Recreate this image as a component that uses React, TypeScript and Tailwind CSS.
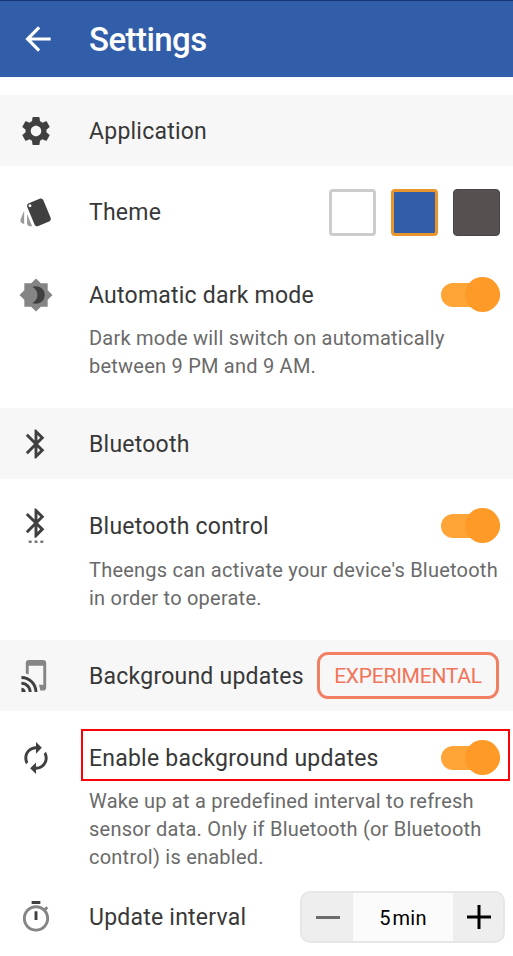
import type { ReactNode } from "react";

function Icon({ children }: { children: ReactNode }) {
  return (
    <svg viewBox="0 0 24 24" className="ml-[18px] h-9 w-9 shrink-0 fill-[#404040] p-[0.5px]">
      {children}
    </svg>
  );
}

function Label({ children }: { children: ReactNode }) {
  return (
    <span className="ml-[35px] flex-1 whitespace-nowrap pt-[2px] text-[23px] leading-7 tracking-[0.23px] text-[#383838]">
      {children}
    </span>
  );
}

function Section({ icon, title, children }: { icon: ReactNode; title: string; children?: ReactNode }) {
  return (
    <div className="flex h-[71px] items-center bg-[#f7f7f7] pr-[14px]">
      {icon}
      <Label>{title}</Label>
      {children}
    </div>
  );
}

function Toggle() {
  return (
    <span className="flex h-[35px] w-[59px] shrink-0 items-center">
      <span className="flex h-6 w-[59px] items-center justify-end rounded-full bg-[#ffa436]">
        <span className="h-[35px] w-[35px] shrink-0 rounded-full bg-[#fd9a28]" />
      </span>
    </span>
  );
}

function Description({ lines }: { lines: string[] }) {
  return (
    <p className="pl-[89px] text-[20px] leading-7 tracking-[0.23px] text-[#6a6a6a]">
      {lines.map((line) => (
        <span key={line} className="block whitespace-nowrap">
          {line}
        </span>
      ))}
    </p>
  );
}

const gear =
  "M19.14 12.94c.04-.3.06-.61.06-.94 0-.32-.02-.64-.07-.94l2.03-1.58c.18-.14.23-.41.12-.61l-1.92-3.32c-.12-.22-.37-.29-.59-.22l-2.39.96c-.5-.38-1.03-.7-1.62-.94l-.36-2.54c-.04-.24-.24-.41-.48-.41h-3.84c-.24 0-.43.17-.47.41l-.36 2.54c-.59.24-1.13.57-1.62.94l-2.39-.96c-.22-.08-.47 0-.59.22L2.74 8.87c-.12.21-.08.47.12.61l2.03 1.58c-.05.3-.09.63-.09.94s.02.64.07.94l-2.03 1.58c-.18.14-.23.41-.12.61l1.92 3.32c.12.22.37.29.59.22l2.39-.96c.5.38 1.03.7 1.62.94l.36 2.54c.05.24.24.41.48.41h3.84c.24 0 .44-.17.47-.41l.36-2.54c.59-.24 1.13-.56 1.62-.94l2.39.96c.22.08.47 0 .59-.22l1.92-3.32c.12-.22.07-.47-.12-.61l-2.01-1.58zM12 15.6c-1.98 0-3.6-1.62-3.6-3.6s1.62-3.6 3.6-3.6 3.6 1.62 3.6 3.6-1.62 3.6-3.6 3.6z";

export default function App() {
  return (
    <main className="h-[956px] w-[513px] overflow-hidden bg-white font-[Roboto,sans-serif]">
      <header className="flex h-[77px] items-center border-t border-[#173572] bg-[#325ea9]">
        <svg viewBox="0 0 24 24" className="ml-[19px] h-[38px] w-[38px] fill-white">
          <path d="M20 11H7.83l5.59-5.59L12 4l-8 8 8 8 1.41-1.41L7.83 13H20v-2z" />
        </svg>
        <h1 className="ml-8 mt-px text-[33px] font-medium leading-10 tracking-[-0.55px] text-white">Settings</h1>
      </header>

      <div className="pt-[18px]">
        <Section title="Application" icon={<Icon><path d={gear} /></Icon>} />

        <div className="flex h-[92px] items-center pr-[13px]">
          <Icon>
            <path fill="#999999" d="M2.53 19.65l1.34.56v-9.03l-2.43 5.86c-.41 1.02.08 2.19 1.09 2.61zM5.88 19.75c0 1.1.9 2 2 2h1.45l-3.45-8.34v6.34z" />
            <path d="M22.03 15.95L17.07 3.98c-.31-.75-1.04-1.21-1.81-1.23-.26 0-.53.04-.79.15L7.1 5.95c-.75.31-1.21 1.03-1.23 1.8-.01.27.04.54.15.8l4.96 11.97c.31.76 1.05 1.22 1.83 1.23.26 0 .52-.05.77-.15l7.36-3.05c1.02-.42 1.51-1.59 1.09-2.6zM7.88 8.75c-.55 0-1-.45-1-1s.45-1 1-1 1 .45 1 1-.45 1-1 1z" />
          </Icon>
          <Label>Theme</Label>
          <div className="flex gap-[15px]">
            <span className="h-[47px] w-[47px] rounded-[4px] border-3 border-[#cccccc] bg-white" />
            <span className="h-[47px] w-[47px] rounded-[4px] border-3 border-[#e9952d] bg-[#325ea9]" />
            <span className="h-[47px] w-[47px] rounded-[4px] border border-[#474545] bg-[#555150]" />
          </div>
        </div>

        <div className="h-[150px] pt-[7px]">
          <div className="flex h-[59px] items-center pr-[13px]">
            <Icon>
              <path fill="#858585" d="M20 8.69V4h-4.69L12 .69 8.69 4H4v4.69L.69 12 4 15.31V20h4.69L12 23.31 15.31 20H20v-4.69L23.31 12 20 8.69z" />
              <path d="M12 18c-.89 0-1.74-.2-2.5-.55C11.56 16.5 13 14.42 13 12s-1.44-4.5-3.5-5.45C10.26 6.2 11.11 6 12 6c3.31 0 6 2.69 6 6s-2.69 6-6 6z" />
            </Icon>
            <Label>Automatic dark mode</Label>
            <Toggle />
          </div>
          <Description lines={["Dark mode will switch on automatically", "between 9 PM and 9 AM."]} />
        </div>

        <Section
          title="Bluetooth"
          icon={
            <Icon>
              <path d="M17.71 7.71L12 2h-1v7.59L6.41 5 5 6.41 10.59 12 5 17.59 6.41 19 11 14.41V22h1l5.71-5.71-4.3-4.29 4.3-4.29zM13 5.83l1.88 1.88L13 9.59V5.83zm1.88 10.46L13 18.17v-3.76l1.88 1.88z" />
            </Icon>
          }
        />

        <div className="h-[161px] pt-[17px]">
          <div className="mb-px flex h-[59px] items-center pr-[13px]">
            <Icon>
              <path d="M17.71 5.71L12 0h-1v7.59L6.41 3 5 4.41 10.59 10 5 15.59 6.41 17 11 12.41V20h1l5.71-5.71-4.3-4.29 4.3-4.29zM13 3.83l1.88 1.88L13 7.59V3.83zm1.88 10.46L13 16.17v-3.76l1.88 1.88z" />
              <path fill="#777777" d="M11 24h2v-2h-2v2zm-4 0h2v-2H7v2zm8 0h2v-2h-2v2z" />
            </Icon>
            <Label>Bluetooth control</Label>
            <Toggle />
          </div>
          <Description lines={["Theengs can activate your device's Bluetooth", "in order to operate."]} />
        </div>

        <Section
          title="Background updates"
          icon={
            <Icon>
              <path d="M2 16v2c2.76 0 5 2.24 5 5h2c0-3.87-3.13-7-7-7zm0 4v3h3c0-1.66-1.34-3-3-3zm0-8v2c4.97 0 9 4.03 9 9h2c0-6.08-4.92-11-11-11z" />
              <path fill="#858585" d="M17 1.01L7 1c-1.1 0-2 .9-2 2v7.37c.69.16 1.36.37 2 .64V5h10v13h-3.03c.52 1.25.84 2.59.95 4H17c1.1 0 2-.9 2-2V3c0-1.1-.9-1.99-2-1.99z" />
            </Icon>
          }
        >
          <span className="flex h-[47px] w-[182px] shrink-0 items-center justify-center rounded-[11px] border-3 border-[#f27e63] pt-[2px] text-[21px] tracking-[-0.25px] text-[#f27458]">
            EXPERIMENTAL
          </span>
        </Section>

        <div className="h-[160px] pt-[17px]">
          <div className="relative flex h-[59px] items-center pr-[13px]">
            <Icon>
              <path d="M12 6v3l4-4-4-4v3c-4.42 0-8 3.58-8 8 0 1.57.46 3.03 1.24 4.26L6.7 14.8c-.45-.83-.7-1.79-.7-2.8 0-3.31 2.69-6 6-6zm6.76 1.74L17.3 9.2c.44.84.7 1.79.7 2.8 0 3.31-2.69 6-6 6v-3l-4 4 4 4v-3c4.42 0 8-3.58 8-8 0-1.57-.46-3.03-1.24-4.26z" />
            </Icon>
            <Label>Enable background updates</Label>
            <Toggle />
            <span className="absolute left-[81px] top-px h-[52px] w-[429px] border-2 border-[#fb0007]" />
          </div>
          <Description
            lines={[
              "Wake up at a predefined interval to refresh",
              "sensor data. Only if Bluetooth (or Bluetooth",
              "control) is enabled.",
            ]}
          />
        </div>

        <div className="flex h-[92px] items-center pr-2">
          <Icon>
            <path d="M9 1h6v2H9zM11 8h2v6h-2z" />
            <path fill="#858585" d="M19.03 7.39l1.42-1.42c-.43-.51-.9-.99-1.41-1.41l-1.42 1.42C16.07 4.74 14.12 4 12 4c-4.97 0-9 4.03-9 9s4.02 9 9 9 9-4.03 9-9c0-2.12-.74-4.07-1.97-5.61zM12 20c-3.87 0-7-3.13-7-7s3.13-7 7-7 7 3.13 7 7-3.13 7-7 7z" />
          </Icon>
          <Label>Update interval</Label>
          <div className="flex h-[52px] w-[205px] shrink-0 overflow-hidden rounded-[10px] border-2 border-[#e7e7e7] bg-[#eeeeee]">
            <span className="flex w-[51px] items-center justify-center">
              <span className="h-[3px] w-6 bg-[#6c6c6c]" />
            </span>
            <span className="flex w-[100px] items-center justify-center bg-[#fbfbfb] pt-[2px] text-[20px] text-black">
              5<span className="ml-[2px] tracking-[0.3px]">min</span>
            </span>
            <span className="flex w-[50px] items-center justify-center pl-[2px]">
              <svg viewBox="0 0 24 24" className="h-6 w-6 fill-black">
                <path d="M10.5 0h3v10.5H24v3H13.5V24h-3V13.5H0v-3h10.5z" />
              </svg>
            </span>
          </div>
        </div>
      </div>
    </main>
  );
}
